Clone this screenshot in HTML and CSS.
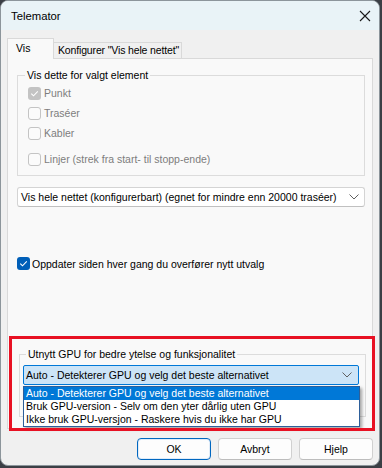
FILE: index.html
```html
<!DOCTYPE html>
<html>
<head>
<meta charset="utf-8">
<link rel="stylesheet" href="styles.css">
</head>
<body>
<div class="window">
  <div class="titlebar">
    <span class="title">Telemator</span>
    <svg class="close" width="12" height="12" viewBox="0 0 12 12"><path d="M1 1 L11 11 M11 1 L1 11" stroke="#1a1a1a" stroke-width="1.1" fill="none"/></svg>
  </div>
  <div class="content">
    <div class="tabs">
      <div class="tab active">Vis</div>
      <div class="tab">Konfigurer "Vis hele nettet"</div>
    </div>
    <div class="panel">
      <fieldset class="group group1">
        <legend>Vis dette for valgt element</legend>
        <div class="row disabled"><span class="cb cb-dis-checked"><svg width="13" height="13" viewBox="0 0 13 13"><path d="M3.3 6.6 L5.5 8.8 L9.8 4.4" stroke="#fff" stroke-width="1.1" fill="none"/></svg></span>Punkt</div>
        <div class="row disabled"><span class="cb cb-dis"></span>Traséer</div>
        <div class="row disabled"><span class="cb cb-dis"></span>Kabler</div>
        <div class="row disabled gap"><span class="cb cb-dis"></span>Linjer (strek fra start- til stopp-ende)</div>
      </fieldset>
      <div class="combo combo1">
        <span>Vis hele nettet (konfigurerbart) (egnet for mindre enn 20000 traséer)</span>
        <svg class="chev" width="10" height="6" viewBox="0 0 10 6"><path d="M0.5 0.5 L5 5 L9.5 0.5" stroke="#606060" stroke-width="1" fill="none"/></svg>
      </div>
      <div class="row update"><span class="cb cb-on"><svg width="13" height="13" viewBox="0 0 13 13"><path d="M3.3 6.6 L5.5 8.8 L9.8 4.4" stroke="#fff" stroke-width="1.1" fill="none"/></svg></span>Oppdater siden hver gang du overfører nytt utvalg</div>
      <fieldset class="group group2">
        <legend>Utnytt GPU for bedre ytelse og funksjonalitet</legend>
        <div class="combo combo2">
          <span>Auto - Detekterer GPU og velg det beste alternativet</span>
          <svg class="chev" width="10" height="6" viewBox="0 0 10 6"><path d="M0.5 0.5 L5 5 L9.5 0.5" stroke="#606060" stroke-width="1" fill="none"/></svg>
        </div>
      </fieldset>
    </div>
    <div class="buttons">
      <div class="btn default">OK</div>
      <div class="btn">Avbryt</div>
      <div class="btn">Hjelp</div>
    </div>
  </div>
  <div class="droplist">
    <div class="opt sel">Auto - Detekterer GPU og velg det beste alternativet</div>
    <div class="opt">Bruk GPU-version - Selv om den yter dårlig uten GPU</div>
    <div class="opt">Ikke bruk GPU-versjon - Raskere hvis du ikke har GPU</div>
  </div>
  <div class="highlight"></div>
</div>
</body>
</html>
```
FILE: styles.css
```css
* { box-sizing: border-box; }
html, body {
  margin: 0;
  padding: 0;
  background: #3b3f45;
  width: 382px;
  height: 468px;
  overflow: hidden;
}
body {
  font-family: "Liberation Sans", Arial, sans-serif;
  font-size: 10.5px;
  color: #000;
}
.window {
  position: relative;
  width: 380px;
  height: 466px;
  background: #f0f0f0;
  border: 1px solid #8c959b;
  border-radius: 8px;
  overflow: hidden;
}
.titlebar {
  height: 29px;
  background: #e9f3f7;
  display: flex;
  align-items: center;
  justify-content: space-between;
  padding: 0 8px 0 10px;
}
.title { font-size: 11.3px; line-height: 14px; }
.close { display: block; }
.content {
  padding: 8px 6px 0 6px;
}
.tabs {
  display: flex;
  align-items: flex-end;
  height: 20px;
  position: relative;
  z-index: 1;
}
.tab {
  height: 16px;
  line-height: 14px;
  padding: 0 2px 0 4px;
  border: 1px solid #d9d9d9;
  border-left: none;
  border-bottom: none;
  background: #f0f0f0;
  white-space: nowrap;
  letter-spacing: -0.15px;
}
.tab.active {
  height: 21px;
  margin-bottom: -1px;
  width: 47px;
  padding: 2px 0 0 8px;
  line-height: 15px;
  border-left: 1px solid #d9d9d9;
  background: #f9f9f9;
  letter-spacing: 0;
}
.panel {
  height: 371px;
  border: 1px solid #d9d9d9;
  background: #f9f9f9;
  padding: 0 7px 0 9px;
}
.group {
  margin: 0;
  border: 1px solid #dcdcdc;
  padding: 0 0 0 10px;
}
.group legend {
  padding: 0 2px;
  margin-left: -3px;
  line-height: 16px;
  height: 16px;
}
.group1 {
  margin-top: 8px;
  padding-bottom: 6px;
}
.row {
  display: flex;
  align-items: center;
  height: 20px;
  white-space: nowrap;
}
.row.disabled { color: #7d7d7d; }
.row.gap { margin-top: 6px; }
.cb {
  width: 13px;
  height: 13px;
  border-radius: 3px;
  margin-right: 3px;
  flex: none;
  display: block;
}
.cb svg { display: block; }
.cb-dis { border: 1px solid #c4c4c4; background: #fbfbfb; }
.cb-dis-checked { background: #c3c3c3; }
.cb-on { background: #005fb8; }
.combo {
  display: flex;
  align-items: center;
  justify-content: space-between;
  height: 20px;
  border: 1px solid #d4d4d4;
  border-bottom-color: #c0c0c0;
  border-radius: 3px;
  background: #fff;
  padding: 0 5px 0 3px;
  white-space: nowrap;
}
.combo1 { margin-top: 11px; }
.update {
  height: 17px;
  margin-top: 48px;
  margin-left: 0;
}
.update .cb { margin-right: 2px; }
.group2 {
  margin-top: 74px;
  margin-left: 2px;
  margin-right: -1px;
  padding: 3px 6px 31px 3px;
}
.group2 legend { margin-left: 3px; }
.combo2 {
  background: #cce4f7;
  border: 1px solid #0078d7;
  border-radius: 2px;
  padding-left: 2px;
  padding-right: 6px;
}
.buttons {
  display: flex;
  justify-content: flex-end;
  gap: 7px;
  margin-top: 9px;
  padding-right: 0;
}
.btn {
  width: 74px;
  height: 22px;
  border: 1px solid #d0d0d0;
  border-bottom-color: #bdbdbd;
  border-radius: 4px;
  background: #fdfdfd;
  display: flex;
  align-items: center;
  justify-content: center;
}
.btn.default {
  border: 1px solid #0067c0;
  box-shadow: inset 0 0 0 1px #e0ecf8;
}
.droplist {
  position: absolute;
  left: 22px;
  top: 385px;
  width: 337px;
  border: 1px solid #2d5f9a;
  background: #fff;
  box-shadow: 2px 2px 3px rgba(0, 0, 0, 0.35);
  z-index: 5;
}
.opt {
  height: 13px;
  line-height: 13px;
  padding-left: 2px;
  white-space: nowrap;
}
.opt.sel { background: #0078d7; color: #fff; }
.highlight {
  position: absolute;
  left: 8px;
  top: 335px;
  width: 366px;
  height: 95px;
  border: 3px solid #e81123;
  z-index: 6;
}
```
